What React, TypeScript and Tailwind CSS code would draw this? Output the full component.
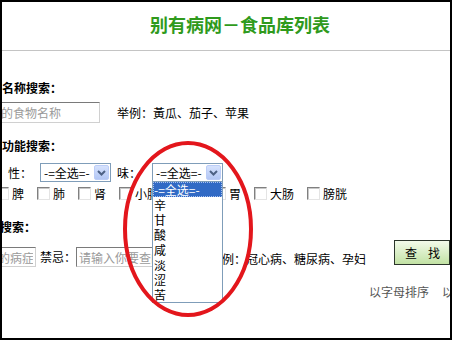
const cjk = "font-['SimSun','Noto_Sans_CJK_SC',sans-serif]";

const organs = ["脾", "肺", "肾", "小肠", "胆", "胃", "大肠", "膀胱"];
const tastes = ["辛", "甘", "酸", "咸", "淡", "涩", "苦"];

const FakeSelect = ({ className = "" }: { className?: string }) => (
  <div
    className={`flex h-[19px] w-[71px] shrink-0 items-center justify-between border border-[#7f9db9] bg-white pl-[3px] pr-[1px] ${className}`}
  >
    <span className="text-[12px] leading-[15px]">-=全选=-</span>
    <span className="flex h-[15px] w-[15px] items-center justify-center rounded-[2px] border border-[#bccdf7] bg-gradient-to-b from-[#d6e2fd] to-[#b3c7f5]">
      <svg width="9" height="6" viewBox="0 0 9 6">
        <path d="M1 1 L4.5 4.5 L8 1" fill="none" stroke="#4d6185" strokeWidth="2" />
      </svg>
    </span>
  </div>
);

const Checkbox = () => (
  <span className="h-[13px] w-[13px] shrink-0 border border-t-[#808080] border-l-[#808080] border-r-[#e4e4e4] border-b-[#e4e4e4] bg-white shadow-[inset_1px_1px_0_#c8c8c8]" />
);

const TextBox = ({ placeholder, className = "" }: { placeholder: string; className?: string }) => (
  <input
    type="text"
    placeholder={placeholder}
    className={`h-[20px] shrink-0 border border-t-[#7a7a7a] border-l-[#7a7a7a] border-r-[#d0d0d0] border-b-[#d0d0d0] bg-white px-[2px] text-[12px] leading-[16px] outline-none placeholder:text-[#9a9a9a] ${className}`}
  />
);

export default function App() {
  return (
    <div
      className={`relative h-[340px] w-[452px] overflow-hidden border-2 border-black bg-white text-[12px] text-black ${cjk}`}
    >
      {/* header */}
      <div className="flex h-[49px] items-center justify-center border-b border-[#c4c4c4] pb-[4px] pl-[28px]">
        <h1 className="text-[18px] font-bold leading-[22px] text-[#2f9a1c]">别有病网－食品库列表</h1>
      </div>

      <div className="flex flex-col whitespace-nowrap">
        <div className="mt-[31px] flex h-[12px] items-center font-bold">名称搜索：</div>

        <div className="mt-[8px] flex h-[21px] items-center">
          <TextBox placeholder="请输入你要查的食物名称" className="-ml-[76px] h-[21px] w-[174px]" />
          <span className="ml-[17px] leading-[16px]">举例：黃瓜、茄子、苹果</span>
        </div>

        <div className="mt-[17px] flex h-[12px] items-center font-bold">功能搜索：</div>

        <div className="mt-[11px] flex h-[19px] items-center pl-[6px]">
          <span className="w-[24px] leading-[16px]">性：</span>
          <FakeSelect className="ml-[8px]" />
          <span className="ml-[6px] w-[24px] leading-[16px]">味：</span>
          <FakeSelect className="ml-[11px] w-[70px]" />
        </div>

        <div className="mt-[5px] flex h-[13px] items-center -ml-[6px]">
          {organs.map((o) => (
            <label key={o} className="mr-[13px] flex shrink-0 items-center gap-[3px]">
              <Checkbox />
              <span className="leading-[13px]">{o}</span>
            </label>
          ))}
        </div>

        <div className="mt-[21px] flex h-[12px] items-center -ml-[26px] font-bold">疾病搜索：</div>

        <div className="mt-[7px] flex h-[27px] items-end">
          <TextBox placeholder="请输入你要查的病症" className="-ml-[79px] w-[113px]" />
          <span className="ml-[4px] flex h-[20px] items-center leading-[16px]">禁忌：</span>
          <TextBox placeholder="请输入你要查的禁忌" className="w-[122px]" />
          <span className="ml-[12px] flex h-[20px] items-center pt-[3px] leading-[16px]">举例：冠心病、糖尿病、孕妇</span>
          <button
            type="button"
            className="ml-[28px] flex h-[25px] w-[56px] shrink-0 items-center gap-[11px] self-start border border-[#2b352b] bg-gradient-to-b from-[#f2faea] to-[#c2e2a4] pl-[10px] text-[12px] leading-[16px]"
          >
            <span>查</span>
            <span>找</span>
          </button>
        </div>

        <div className="ml-[367px] mt-[19px] flex h-[12px] items-center gap-[13px] text-[#555]">
          <span>以字母排序</span>
          <span>以类别排序</span>
        </div>
      </div>

      {/* opened taste dropdown */}
      <div className="absolute left-[150px] top-[179px] w-[71px] border border-[#7f9db9] bg-white">
        <div className="h-[15px] bg-[#316ac5] pl-[1px] leading-[15px] text-white outline-1 -outline-offset-1 outline-dotted outline-[#a9c1ee]">
          -=全选=-
        </div>
        {tastes.map((t) => (
          <div key={t} className="h-[15px] pl-[1px] leading-[15px]">
            {t}
          </div>
        ))}
      </div>

      {/* red hand-drawn circle */}
      <svg
        className="pointer-events-none absolute -left-[2px] -top-[2px]"
        width="452"
        height="340"
        viewBox="0 0 452 340"
      >
        <ellipse cx="188" cy="229" rx="63" ry="86" fill="none" stroke="#e3161c" strokeWidth="4" />
      </svg>
    </div>
  );
}
